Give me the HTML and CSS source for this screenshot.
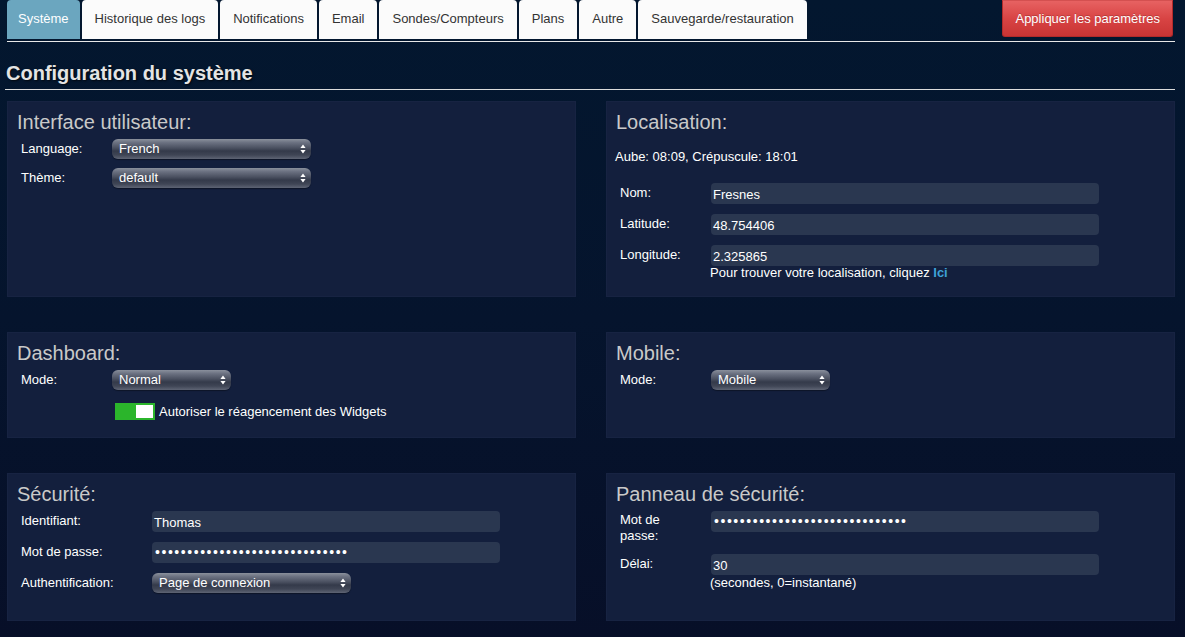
FILE: index.html
```html
<!DOCTYPE html>
<html lang="fr">
<head>
<meta charset="utf-8">
<title>Configuration du système</title>
<link rel="stylesheet" href="styles.css">
</head>
<body>
<div class="topbar">
  <ul class="tabs">
    <li class="tab active">Système</li>
    <li class="tab">Historique des logs</li>
    <li class="tab">Notifications</li>
    <li class="tab">Email</li>
    <li class="tab">Sondes/Compteurs</li>
    <li class="tab">Plans</li>
    <li class="tab">Autre</li>
    <li class="tab">Sauvegarde/restauration</li>
  </ul>
  <button class="apply">Appliquer les paramètres</button>
</div>
<div class="rule"></div>
<h1 class="title">Configuration du système</h1>

<div class="grid">
  <section class="panel">
    <h2>Interface utilisateur:</h2>
    <div class="row srow">
      <span class="label">Language:</span>
      <div class="select w199"><span>French</span><svg class="arr" width="6" height="10" viewBox="0 0 6 10"><path d="M3 0.5 L5.6 4 L0.4 4 Z M3 9.5 L5.6 6 L0.4 6 Z" fill="#fff"/></svg></div>
    </div>
    <div class="row srow">
      <span class="label">Thème:</span>
      <div class="select w199"><span>default</span><svg class="arr" width="6" height="10" viewBox="0 0 6 10"><path d="M3 0.5 L5.6 4 L0.4 4 Z M3 9.5 L5.6 6 L0.4 6 Z" fill="#fff"/></svg></div>
    </div>
  </section>

  <section class="panel">
    <h2>Localisation:</h2>
    <p class="sun">Aube: 08:09, Crépuscule: 18:01</p>
    <div class="row irow">
      <span class="label">Nom:</span>
      <div class="input w388">Fresnes</div>
    </div>
    <div class="row irow">
      <span class="label">Latitude:</span>
      <div class="input w388">48.754406</div>
    </div>
    <div class="row irow last">
      <span class="label">Longitude:</span>
      <div class="ctl">
        <div class="input w388">2.325865</div>
        <div class="hint">Pour trouver votre localisation, cliquez <a class="link">Ici</a></div>
      </div>
    </div>
  </section>

  <section class="panel">
    <h2>Dashboard:</h2>
    <div class="row srow">
      <span class="label">Mode:</span>
      <div class="select w119"><span>Normal</span><svg class="arr" width="6" height="10" viewBox="0 0 6 10"><path d="M3 0.5 L5.6 4 L0.4 4 Z M3 9.5 L5.6 6 L0.4 6 Z" fill="#fff"/></svg></div>
    </div>
    <div class="togglerow">
      <span class="toggle"><span class="knob"></span></span>
      <span>Autoriser le réagencement des Widgets</span>
    </div>
  </section>

  <section class="panel">
    <h2>Mobile:</h2>
    <div class="row srow">
      <span class="label">Mode:</span>
      <div class="select w119"><span>Mobile</span><svg class="arr" width="6" height="10" viewBox="0 0 6 10"><path d="M3 0.5 L5.6 4 L0.4 4 Z M3 9.5 L5.6 6 L0.4 6 Z" fill="#fff"/></svg></div>
    </div>
  </section>

  <section class="panel">
    <h2>Sécurité:</h2>
    <div class="row irow wide">
      <span class="label">Identifiant:</span>
      <div class="input w348">Thomas</div>
    </div>
    <div class="row irow wide">
      <span class="label">Mot de passe:</span>
      <div class="input w348 dots">••••••••••••••••••••••••••••••</div>
    </div>
    <div class="row srow wide">
      <span class="label">Authentification:</span>
      <div class="select w199"><span>Page de connexion</span><svg class="arr" width="6" height="10" viewBox="0 0 6 10"><path d="M3 0.5 L5.6 4 L0.4 4 Z M3 9.5 L5.6 6 L0.4 6 Z" fill="#fff"/></svg></div>
    </div>
  </section>

  <section class="panel">
    <h2>Panneau de sécurité:</h2>
    <div class="row irow">
      <span class="label narrow">Mot de passe:</span>
      <div class="input w388 dots">••••••••••••••••••••••••••••••</div>
    </div>
    <div class="row irow tight">
      <span class="label">Délai:</span>
      <div class="ctl">
        <div class="input w388">30</div>
        <div class="hint2">(secondes, 0=instantané)</div>
      </div>
    </div>
  </section>
</div>
</body>
</html>
```

FILE: styles.css
```css
html, body {
  margin: 0;
  padding: 0;
}
body {
  width: 1185px;
  height: 637px;
  overflow: hidden;
  background: linear-gradient(180deg, #03172f 0%, #05142d 50%, #070f28 100%);
  font-family: "Liberation Sans", Arial, Helvetica, sans-serif;
  font-size: 13px;
  color: #fff;
}

.topbar {
  display: flex;
  justify-content: space-between;
  align-items: flex-start;
  padding: 0 12px 0 7px;
  height: 40px;
}
.tabs {
  display: flex;
  gap: 2px;
  list-style: none;
  margin: 0;
  padding: 0;
}
.tab {
  height: 39px;
  line-height: 37px;
  padding: 0 13px;
  background: #fbfbfb;
  color: #333;
  border-radius: 4px 4px 0 0;
  font-size: 13px;
  white-space: nowrap;
}
.tab.active {
  background: #6ba6bf;
  color: #fff;
  padding: 0 11px;
}
.apply {
  height: 37px;
  padding: 0 12px;
  font-family: inherit;
  font-size: 13px;
  color: #fff;
  background: linear-gradient(180deg, #e76262 0%, #d84444 50%, #c93434 100%);
  border: 1px solid #b32a2a;
  border-top-color: #d45050;
  border-radius: 0 0 3px 3px;
  text-shadow: 0 -1px 0 rgba(0,0,0,0.2);
}

.rule {
  margin: 1px 10px 0 7px;
  border-top: 1px solid #e8e8e8;
}

.title {
  margin: 0 10px 0 5px;
  padding: 19px 0 4px 1px;
  font-size: 20px;
  line-height: 24px;
  font-weight: bold;
  color: #e4e4e4;
  text-shadow: 1px 1px 2px rgba(0,0,0,0.7);
  border-bottom: 1px solid #dcdcdc;
}

.grid {
  display: grid;
  grid-template-columns: 569px 569px;
  grid-template-rows: 196px 106px 148px;
  column-gap: 30px;
  row-gap: 35px;
  margin: 11px 10px 0 7px;
}

.panel {
  background: #131f3d;
  box-shadow: inset 0 0 0 1px #172342;
  padding: 9px 10px 0 10px;
}
.panel h2 {
  margin: 0 0 5px 0;
  font-size: 20px;
  line-height: 24px;
  font-weight: normal;
  color: #c9c9c9;
}

.row {
  display: flex;
  align-items: flex-start;
  padding-left: 4px;
}
.srow { margin-bottom: 9px; }
.irow { margin-bottom: 10px; }
.label {
  width: 91px;
  flex: none;
  box-sizing: border-box;
  padding-top: 2px;
  line-height: 16px;
  color: #fff;
}
.label.narrow { padding-right: 30px; padding-top: 1px; }
.wide .label { width: 131px; }

.select {
  height: 20px;
  box-sizing: border-box;
  display: flex;
  align-items: center;
  justify-content: space-between;
  padding: 0 5px 0 7px;
  border-radius: 6px;
  background: linear-gradient(180deg, #8a909c 0%, #6b7181 18%, #4a5060 45%, #343a4a 60%, #3f4555 80%, #5e6474 100%);
  box-shadow: 0 1px 1px rgba(0,0,0,0.35);
  color: #fff;
  font-size: 13px;
  line-height: 16px;
}
.arr { flex: none; }
.w199 { width: 199px; }
.w119 { width: 119px; }

.input {
  height: 21px;
  box-sizing: border-box;
  padding: 4px 2px 0 2px;
  line-height: 16px;
  background: #2a3750;
  border-radius: 4px;
  color: #fff;
  font-size: 13px;
}
.w388 { width: 388px; }
.w348 { width: 348px; }
.input.dots {
  letter-spacing: 1.55px;
  font-size: 14px;
  padding-left: 3px;
  padding-top: 2px;
}

.ctl {
  display: flex;
  flex-direction: column;
}
.hint {
  margin-left: -1px;
  line-height: 13px;
  color: #fff;
}
.link {
  color: #3ea2d8;
  font-weight: bold;
}
.hint2 {
  margin-left: -1px;
  line-height: 15px;
  color: #fff;
}

.sun {
  margin: 15px 0 19px -1px;
  line-height: 15px;
  color: #fff;
}

.togglerow {
  display: flex;
  align-items: center;
  gap: 4px;
  margin: 13px 0 0 98px;
}
.toggle {
  width: 40px;
  height: 17px;
  box-sizing: border-box;
  background: #2bb52b;
  padding: 2px 2px 2px 21px;
  display: inline-flex;
}
.knob {
  width: 17px;
  height: 13px;
  background: #fff;
}
```
